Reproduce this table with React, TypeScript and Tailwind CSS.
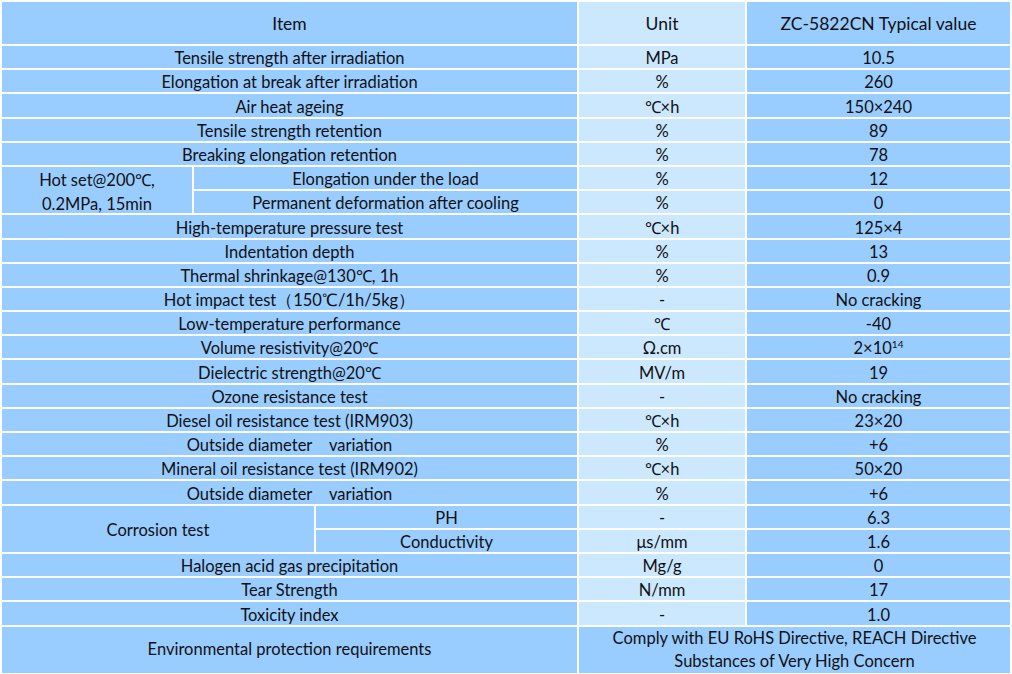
import React from "react";

const B = "bg-[#99ccff]";
const L = "bg-[#cce8ff]";
const cell = "flex items-center justify-center text-center leading-[1.2] pt-[4px]";
const flat = "flex items-center justify-center text-center leading-[1.2]";

type R = { item: string; unit: string; value: React.ReactNode };

const rowsA: R[] = [
  { item: "Tensile strength after irradiation", unit: "MPa", value: "10.5" },
  { item: "Elongation at break after irradiation", unit: "%", value: "260" },
  { item: "Air heat ageing", unit: "℃×h", value: "150×240" },
  { item: "Tensile strength retention", unit: "%", value: "89" },
  { item: "Breaking elongation retention", unit: "%", value: "78" },
];

const rowsB: R[] = [
  { item: "High-temperature pressure test", unit: "℃×h", value: "125×4" },
  { item: "Indentation depth", unit: "%", value: "13" },
  { item: "Thermal shrinkage@130℃, 1h", unit: "%", value: "0.9" },
  { item: "Hot impact test（150℃/1h/5kg）", unit: "-", value: "No cracking" },
  { item: "Low-temperature performance", unit: "℃", value: "-40" },
  {
    item: "Volume resistivity@20℃",
    unit: "Ω.cm",
    value: (
      <span>
        2×10<sup className="text-[10px] relative -top-[6px]">14</sup>
      </span>
    ),
  },
  { item: "Dielectric strength@20℃", unit: "MV/m", value: "19" },
  { item: "Ozone resistance test", unit: "-", value: "No cracking" },
  { item: "Diesel oil resistance test (IRM903)", unit: "℃×h", value: "23×20" },
  { item: "Outside diameter　variation", unit: "%", value: "+6" },
  { item: "Mineral oil resistance test (IRM902)", unit: "℃×h", value: "50×20" },
  { item: "Outside diameter　variation", unit: "%", value: "+6" },
];

const rowsC: R[] = [
  { item: "Halogen acid gas precipitation", unit: "Mg/g", value: "0" },
  { item: "Tear Strength", unit: "N/mm", value: "17" },
  { item: "Toxicity index", unit: "-", value: "1.0" },
];

function Simple({ r }: { r: R }) {
  return (
    <>
      <div className={`${cell} ${B} col-span-3`}>{r.item}</div>
      <div className={`${cell} ${L}`}>{r.unit}</div>
      <div className={`${cell} ${B}`}>{r.value}</div>
    </>
  );
}

export default function App() {
  return (
    <div
      className="w-[1012px] h-[674px] bg-white p-[2px] grid gap-[2px] grid-cols-[190px_120px_261px_166px_263px] grid-rows-[42px_repeat(24,22.2px)_1fr] text-[16.5px] text-[#111111]"
      style={{ fontFamily: "Lato, 'Open Sans', sans-serif" }}
    >
      <div className={`${flat} ${B} col-span-3 text-[17.5px]`}>Item</div>
      <div className={`${flat} ${L} text-[17.5px]`}>Unit</div>
      <div className={`${flat} ${B} text-[17.5px]`}>ZC-5822CN Typical value</div>

      {rowsA.map((r, i) => (
        <Simple key={"a" + i} r={r} />
      ))}

      <div className={`${cell} ${B} row-span-2 leading-[24px]`}>
        Hot set@200℃,
        <br />
        0.2MPa, 15min
      </div>
      <div className={`${cell} ${B} col-span-2`}>Elongation under the load</div>
      <div className={`${cell} ${L}`}>%</div>
      <div className={`${cell} ${B}`}>12</div>
      <div className={`${cell} ${B} col-span-2`}>Permanent deformation after cooling</div>
      <div className={`${cell} ${L}`}>%</div>
      <div className={`${cell} ${B}`}>0</div>

      {rowsB.map((r, i) => (
        <Simple key={"b" + i} r={r} />
      ))}

      <div className={`${cell} ${B} row-span-2 col-span-2`}>Corrosion test</div>
      <div className={`${cell} ${B}`}>PH</div>
      <div className={`${cell} ${L}`}>-</div>
      <div className={`${cell} ${B}`}>6.3</div>
      <div className={`${cell} ${B}`}>Conductivity</div>
      <div className={`${cell} ${L}`}>μs/mm</div>
      <div className={`${cell} ${B}`}>1.6</div>

      {rowsC.map((r, i) => (
        <Simple key={"c" + i} r={r} />
      ))}

      <div className={`${flat} ${B} col-span-3`}>Environmental protection requirements</div>
      <div className={`${flat} ${B} col-span-2 leading-[23px]`}>
        Comply with EU RoHS Directive, REACH Directive
        <br />
        Substances of Very High Concern
      </div>
    </div>
  );
}
